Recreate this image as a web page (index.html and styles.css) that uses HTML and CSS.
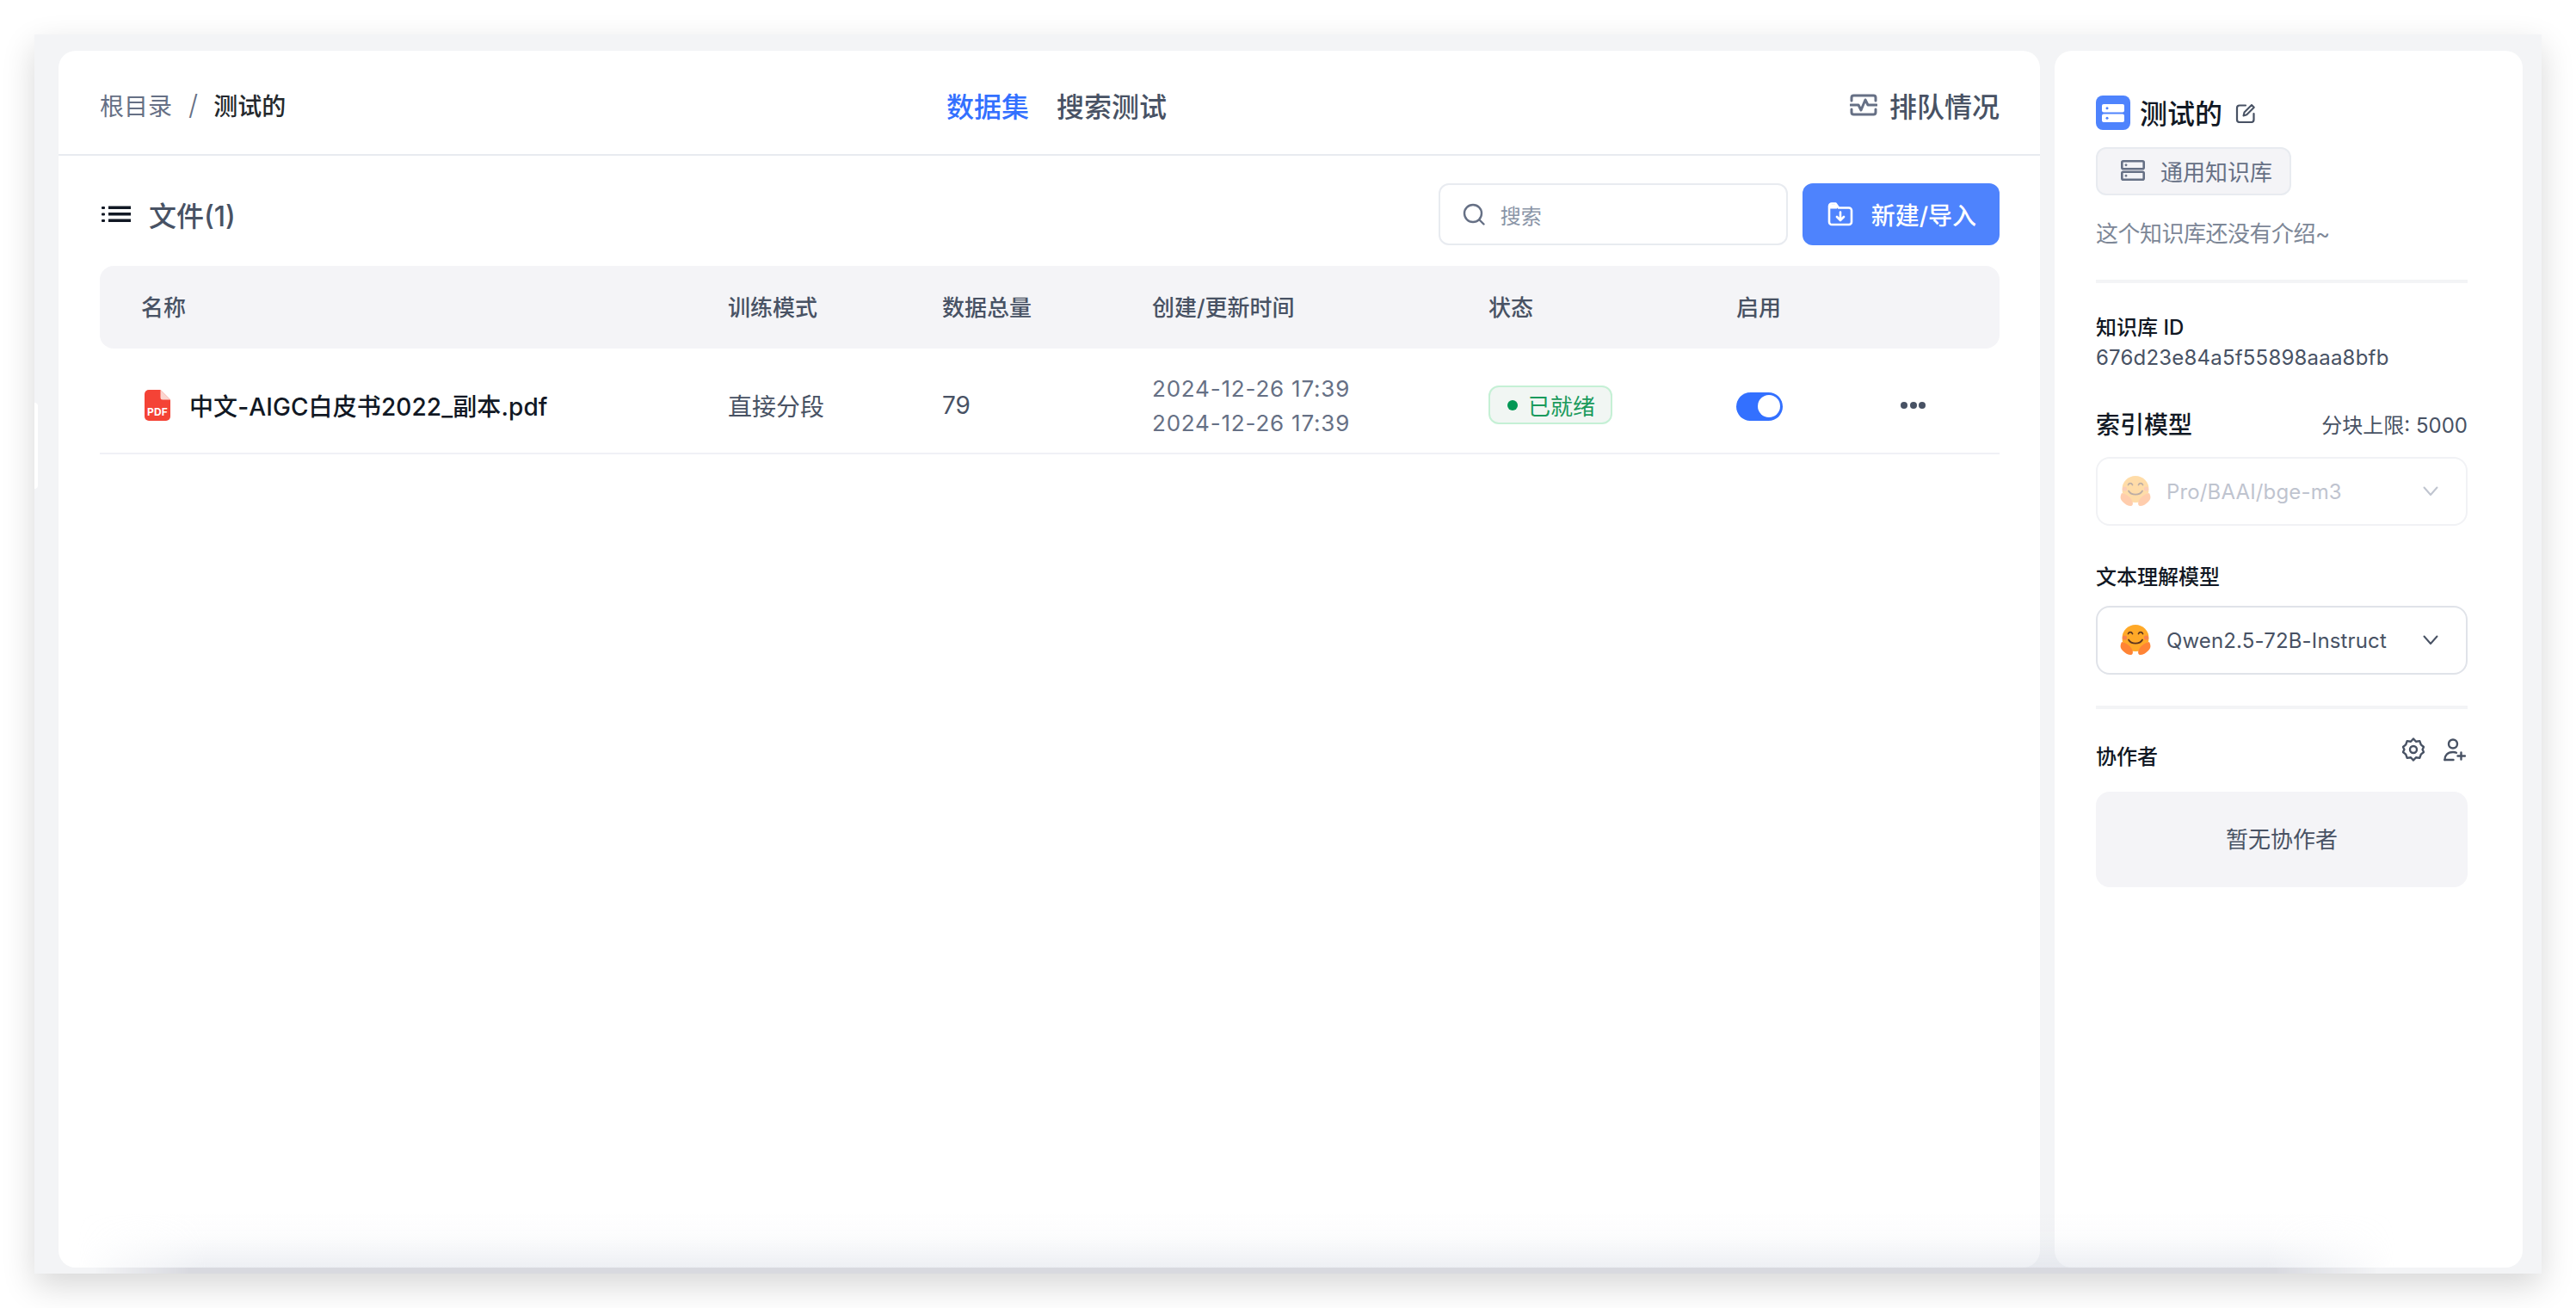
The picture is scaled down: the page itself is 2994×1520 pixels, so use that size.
FILE: index.html
```html
<!DOCTYPE html>
<html lang="zh-CN">
<head>
    <meta charset="UTF-8">
    <meta name="viewport" content="width=device-width, initial-scale=1.0">
    <title>测试的</title>
    <link rel="stylesheet" href="styles.css">
</head>
<body>
    <div class="frame">
        <main class="main-card">
            <header class="top-bar">
                <div class="crumbs">
                    <span class="crumb">根目录</span>
                    <span class="crumb-sep">/</span>
                    <span class="crumb-current">测试的</span>
                </div>
                <nav class="tabs">
                    <a class="tab tab-active">数据集</a>
                    <a class="tab">搜索测试</a>
                </nav>
                <a class="queue">
                    <svg class="queue-icon" viewBox="0 0 32 26" fill="none" stroke="currentColor" stroke-width="3" stroke-linecap="round" stroke-linejoin="round">
                        <path d="M2 8V4.500A2.500 2.500 0 0 1 4.500 2h23A2.500 2.500 0 0 1 30 4.500V8"/>
                        <path d="M2 18v3.500A2.500 2.500 0 0 0 4.500 24h23a2.500 2.500 0 0 0 2.500-2.500V18"/>
                        <path d="M1 13h9l3 6 5-12 3 6h10"/>
                    </svg>
                    排队情况
                </a>
            </header>

            <section class="files">
                <div class="toolbar">
                    <div class="files-title">
                        <svg class="list-icon" viewBox="0 0 34 20" fill="#111824">
                            <rect x="0" y="1" width="4" height="3" rx="1"/>
                            <rect x="0" y="8.500" width="4" height="3" rx="1"/>
                            <rect x="0" y="16" width="4" height="3" rx="1"/>
                            <rect x="8" y="0.500" width="26" height="3.500"/>
                            <rect x="8" y="8" width="26" height="3.500"/>
                            <rect x="8" y="15.500" width="26" height="3.500"/>
                        </svg>
                        文件(1)
                    </div>
                    <div class="search-box">
                        <svg class="search-icon" viewBox="0 0 26 26" fill="none" stroke="currentColor" stroke-width="2.400" stroke-linecap="round">
                            <circle cx="12" cy="12" r="10"/>
                            <path d="M19.500 19.500L24.500 24.500"/>
                        </svg>
                        <span class="search-text">搜索</span>
                    </div>
                    <button class="new-btn">
                        <svg class="new-icon" viewBox="0 0 30 28" fill="none" stroke="#fff" stroke-width="2.600" stroke-linecap="round" stroke-linejoin="round">
                            <path d="M2 4.500A3 3 0 0 1 5 1.500h4.500l3.500 5h12A3 3 0 0 1 28 9.500v13.500a3 3 0 0 1-3 3H5a3 3 0 0 1-3-3z"/>
                            <path d="M2 3h9v4H2z" fill="#fff" stroke-width="1"/>
                            <path d="M15 11.500v9M11 17l4 4 4-4"/>
                        </svg>
                        新建/导入
                    </button>
                </div>

                <div class="table-head">
                    <div class="cell cell-name">名称</div>
                    <div class="cell">训练模式</div>
                    <div class="cell">数据总量</div>
                    <div class="cell">创建/更新时间</div>
                    <div class="cell">状态</div>
                    <div class="cell">启用</div>
                    <div class="cell"></div>
                </div>
                <div class="table-row">
                    <div class="cell cell-name file-name">
                        <svg class="pdf-icon" viewBox="0 0 30 36">
                            <path d="M5 0h13.500L30 11.500V31a5 5 0 0 1-5 5H5a5 5 0 0 1-5-5V5a5 5 0 0 1 5-5z" fill="#f44336"/>
                            <path d="M18.500 0L30 11.500H21a2.500 2.500 0 0 1-2.500-2.500z" fill="#fbd5cf"/>
                            <text x="15" y="29.500" class="pdf-label">PDF</text>
                        </svg>
                        中文-AIGC白皮书2022_副本.pdf
                    </div>
                    <div class="cell cell-mode">直接分段</div>
                    <div class="cell cell-mode">79</div>
                    <div class="cell cell-date">
                        <div>2024-12-26 17:39</div>
                        <div>2024-12-26 17:39</div>
                    </div>
                    <div class="cell">
                        <span class="status"><i class="status-dot"></i>已就绪</span>
                    </div>
                    <div class="cell">
                        <span class="switch"><i class="switch-knob"></i></span>
                    </div>
                    <div class="cell">
                        <span class="more"><i></i><i></i><i></i></span>
                    </div>
                </div>
            </section>
        </main>

        <aside class="side-card">
            <div class="side-title">
                <svg class="kb-icon" viewBox="0 0 40 40">
                    <rect width="40" height="40" rx="8" fill="#4e83fd"/>
                    <rect x="7" y="10" width="26" height="9.500" rx="2" fill="#fff"/>
                    <rect x="7" y="21.500" width="26" height="9.500" rx="2" fill="#fff"/>
                    <circle cx="13" cy="14.700" r="1.500" fill="#4e83fd"/>
                    <circle cx="13" cy="26.200" r="1.500" fill="#4e83fd"/>
                </svg>
                <span class="side-name">测试的</span>
                <svg class="edit-icon" viewBox="0 0 24 24" fill="none" stroke="currentColor" stroke-width="2.200" stroke-linecap="round" stroke-linejoin="round">
                    <path d="M12 3.500H5a3 3 0 0 0-3 3V20a3 3 0 0 0 3 3h13.500a3 3 0 0 0 3-3v-7"/>
                    <path d="M9.500 15.500l1-4L19 3l2.800 2.800-8.500 8.500z" stroke-width="2"/>
                </svg>
            </div>
            <div class="kb-tag">
                <svg class="tag-icon" viewBox="0 0 28 24" fill="none" stroke="currentColor" stroke-width="2.600">
                    <rect x="1.300" y="1.300" width="25.400" height="9" rx="1.500"/>
                    <rect x="1.300" y="13.700" width="25.400" height="9" rx="1.500"/>
                    <circle cx="6" cy="5.800" r="1" fill="currentColor" stroke-width="1"/>
                    <circle cx="6" cy="18.200" r="1" fill="currentColor" stroke-width="1"/>
                </svg>
                通用知识库
            </div>
            <p class="side-desc">这个知识库还没有介绍~</p>
            <div class="side-line side-line-first"></div>

            <div class="side-label id-label">知识库 ID</div>
            <div class="kb-id">676d23e84a5f55898aaa8bfb</div>

            <div class="index-head">
                <span class="index-title">索引模型</span>
                <span class="index-limit">分块上限: 5000</span>
            </div>
            <div class="select select-off">
                <svg class="hug" viewBox="0 0 36 36">
                    <use href="#hug-face"/>
                </svg>
                <span class="select-text">Pro/BAAI/bge-m3</span>
                <svg class="chevron" viewBox="0 0 18 12" fill="none" stroke="currentColor" stroke-width="2" stroke-linecap="round" stroke-linejoin="round"><path d="M1.500 1.500L9 10l7.500-8.500"/></svg>
            </div>

            <div class="side-label text-label">文本理解模型</div>
            <div class="select">
                <svg class="hug" viewBox="0 0 36 36">
                    <g id="hug-face">
                        <circle cx="18" cy="15.500" r="15.500" fill="#ffa928"/>
                        <path d="M2 20c-2 4-2 7 1 10s6 5 10 5c3-1 2-5 0-8s-6-6-11-7z" fill="#ff8435"/>
                        <path d="M34 20c2 4 2 7-1 10s-6 5-10 5c-3-1-2-5 0-8s6-6 11-7z" fill="#ff8435"/>
                        <circle cx="5.500" cy="15" r="2.600" fill="#f7834f"/>
                        <circle cx="30.500" cy="15" r="2.600" fill="#f7834f"/>
                        <path d="M10 17.500c3 5.500 13 5.500 16 0" fill="none" stroke="#5a3420" stroke-width="1.800" stroke-linecap="round"/>
                        <path d="M9.500 10.500c1-2.500 4-2.500 5 0M21.500 10.500c1-2.500 4-2.500 5 0" fill="none" stroke="#5a3420" stroke-width="1.700" stroke-linecap="round"/>
                    </g>
                </svg>
                <span class="select-text">Qwen2.5-72B-Instruct</span>
                <svg class="chevron" viewBox="0 0 18 12" fill="none" stroke="currentColor" stroke-width="2" stroke-linecap="round" stroke-linejoin="round"><path d="M1.500 1.500L9 10l7.500-8.500"/></svg>
            </div>
            <div class="side-line side-line-second"></div>

            <div class="team-head">
                <span class="side-label">协作者</span>
                <div class="team-actions">
                    <svg class="team-icon" viewBox="0 0 26 28" fill="none" stroke="currentColor" stroke-width="2.400" stroke-linejoin="round">
                        <path d="M13 1.500l3 3.300 4.300-.7 1.500 4.200L25 11l-1.400 3 1.400 3-3.200 2.700-1.500 4.200-4.300-.7-3 3.300-3-3.300-4.300.7-1.500-4.200L1 17l1.400-3L1 11l3.200-2.700 1.500-4.200 4.300.7z"/>
                        <circle cx="13" cy="14" r="4"/>
                    </svg>
                    <svg class="team-icon" viewBox="0 0 26 26" fill="none" stroke="currentColor" stroke-width="2.400" stroke-linecap="round">
                        <circle cx="11" cy="6.500" r="5"/>
                        <path d="M1.500 25c0-5 3-9 9.500-9 1.500 0 3 .2 4 .7"/>
                        <path d="M1.500 25h10M20.500 16.500v8M16.500 20.500h8.500"/>
                    </svg>
                </div>
            </div>
            <div class="team-empty">暂无协作者</div>
        </aside>

        <div class="edge-mark"></div>
        <div class="shade-cards"></div>
        <div class="shade-band"></div>
    </div>
</body>
</html>
```

FILE: styles.css
```css
* {
    box-sizing: border-box;
}
body {
    margin: 0;
    width: 2994px;
    height: 1520px;
    padding: 40px;
    overflow: hidden;
    background-color: #fff;
    font-family: Inter, "Noto Sans CJK SC", sans-serif;
    color: #485264;
}
p {
    margin: 0;
}
svg {
    display: block;
    flex: none;
}
.frame {
    position: relative;
    display: flex;
    gap: 17px;
    width: 2914px;
    height: 1440px;
    padding: 19px 22px 7px 28px;
    background-color: #f3f4f6;
    box-shadow: 0 14px 36px rgba(0, 0, 0, 0.16);
}
.main-card {
    width: 2303px;
    background: #fff;
    border-radius: 20px;
}
.top-bar {
    display: flex;
    align-items: center;
    justify-content: space-between;
    height: 122px;
    padding: 5px 47px 0 48px;
    border-bottom: 2px solid #e8ebf0;
}
.crumbs {
    display: flex;
    align-items: center;
    font-size: 28px;
}
.crumb {
    color: #667085;
}
.crumb-sep {
    margin: 0 18px 0 19px;
    font-size: 32px;
    font-weight: 300;
    color: #667085;
}
.crumb-current {
    font-weight: 500;
    color: #24282c;
}
.tabs {
    display: flex;
    gap: 32px;
    margin-right: 26px;
    font-size: 32px;
    font-weight: 500;
}
.tab-active {
    color: #3370ff;
}
.queue {
    display: flex;
    align-items: center;
    gap: 14px;
    font-size: 32px;
    font-weight: 500;
}
.queue-icon {
    width: 32px;
    height: 26px;
    color: #667085;
}
.files {
    padding: 0 47px 0 48px;
}
.toolbar {
    display: flex;
    align-items: center;
    height: 72px;
    margin-top: 32px;
}
.files-title {
    display: flex;
    align-items: center;
    gap: 21px;
    flex: 1;
    font-size: 32px;
    font-weight: 500;
    margin-left: 2px;
}
.list-icon {
    width: 34px;
    height: 20px;
}
.search-box {
    display: flex;
    align-items: center;
    gap: 18px;
    width: 406px;
    height: 72px;
    padding-left: 26px;
    border: 2px solid #e8ebf0;
    border-radius: 12px;
    background: #fff;
}
.search-icon {
    width: 26px;
    height: 26px;
    color: #667085;
}
.search-text {
    font-size: 24px;
    color: #8a95a7;
}
.new-btn {
    display: flex;
    align-items: center;
    gap: 21px;
    height: 72px;
    margin-left: 17px;
    padding: 0 27px 0 29px;
    border: 0;
    border-radius: 12px;
    background: #4e83fd;
    color: #fff;
    font-family: inherit;
    font-size: 28px;
    font-weight: 500;
}
.new-icon {
    width: 30px;
    height: 28px;
}
.table-head,
.table-row {
    display: grid;
    grid-template-columns: 682px 249px 244px 391px 288px 191px 163px;
    align-items: center;
}
.table-head {
    height: 96px;
    margin-top: 24px;
    padding-bottom: 3px;
    border-radius: 16px;
    background: #f4f4f7;
    font-size: 26px;
    font-weight: 500;
}
.table-row {
    height: 123px;
    padding-top: 10px;
    border-bottom: 2px solid #f0f1f6;
}
.cell {
    padding-left: 48px;
}
.file-name {
    display: flex;
    align-items: center;
    gap: 22px;
    padding-left: 52px;
    font-size: 28px;
    font-weight: 500;
    letter-spacing: 0.1px;
    color: #111824;
}
.pdf-icon {
    width: 30px;
    height: 36px;
}
.pdf-label {
    fill: #fff;
    font-size: 12px;
    font-weight: 700;
    text-anchor: middle;
}
.cell-mode {
    font-size: 28px;
}
.cell-date {
    margin-top: 2px;
    font-size: 26px;
    line-height: 40px;
    letter-spacing: 0.8px;
    color: #667085;
}
.status {
    display: inline-flex;
    align-items: center;
    gap: 12px;
    width: 144px;
    height: 45px;
    padding-left: 20px;
    border: 2px solid #c5f0d5;
    border-radius: 12px;
    background: #f1f6f3;
    font-size: 26px;
    color: #1a9a5c;
}
.status-dot {
    width: 12px;
    height: 12px;
    border-radius: 50%;
    background: #039855;
}
.switch {
    display: flex;
    justify-content: flex-end;
    align-items: center;
    width: 54px;
    height: 33px;
    margin-top: 3px;
    padding-right: 3px;
    border-radius: 17px;
    background: #3370ff;
}
.switch-knob {
    width: 26px;
    height: 26px;
    border-radius: 50%;
    background: #fff;
}
.more {
    display: flex;
    gap: 2.500px;
}
.more i {
    width: 8px;
    height: 8px;
    border-radius: 50%;
    background: #485264;
}
.side-card {
    width: 544px;
    padding: 52px 64px 0 48px;
    background: #fff;
    border-radius: 20px;
}
.side-title {
    display: flex;
    align-items: center;
    height: 40px;
}
.kb-icon {
    width: 40px;
    height: 40px;
}
.side-name {
    margin: 0 0 2px 11px;
    font-size: 32px;
    font-weight: 500;
    color: #111824;
}
.edit-icon {
    width: 24px;
    height: 24px;
    margin-left: 15px;
    color: #485264;
}
.kb-tag {
    display: inline-flex;
    align-items: center;
    gap: 18px;
    width: 227px;
    height: 56px;
    margin-top: 20px;
    padding: 0 0 2px 27px;
    border: 2px solid #e8ebf0;
    border-radius: 12px;
    background: #f4f4f7;
    font-size: 26px;
    color: #667085;
}
.tag-icon {
    width: 28px;
    height: 24px;
}
.side-desc {
    margin-top: 26px;
    font-size: 26px;
    line-height: 38px;
    letter-spacing: -0.5px;
    color: #7d8797;
}
.side-line {
    height: 4px;
    background: #f3f4f6;
}
.side-line-first {
    margin-top: 34px;
}
.side-label {
    font-size: 24px;
    font-weight: 500;
    line-height: 36px;
    color: #111824;
}
.id-label {
    margin-top: 34px;
}
.kb-id {
    font-size: 24px;
    line-height: 36px;
    letter-spacing: 0.2px;
    margin-top: -1px;
}
.index-head {
    display: flex;
    justify-content: space-between;
    align-items: center;
    height: 40px;
    margin-top: 38px;
}
.index-title {
    font-size: 28px;
    font-weight: 500;
    color: #111824;
}
.index-limit {
    font-size: 24px;
}
.select {
    display: flex;
    align-items: center;
    height: 80px;
    margin-top: 19px;
    padding: 0 32px 0 26px;
    border: 2px solid #e0e3e9;
    border-radius: 16px;
    font-size: 24px;
}
.select-off {
    border-color: #f1f2f5;
    color: #bfc4cf;
}
.select-off .hug {
    opacity: 0.4;
}
.hug {
    width: 36px;
    height: 36px;
}
.select-text {
    flex: 1;
    margin-left: 18px;
    letter-spacing: 0.15px;
    white-space: nowrap;
}
.chevron {
    width: 18px;
    height: 12px;
}
.text-label {
    margin-top: 42px;
}
.text-label + .select {
    margin-top: 15px;
}
.side-line-second {
    margin-top: 36px;
}
.team-head {
    display: flex;
    justify-content: space-between;
    align-items: flex-start;
    height: 64px;
    margin-top: 34px;
    padding-top: 4px;
}
.team-actions {
    display: flex;
    gap: 22px;
    margin: -5px 2px 0 0;
}
.team-icon {
    width: 26px;
    height: 28px;
    color: #485264;
}
.team-empty {
    display: flex;
    align-items: center;
    justify-content: center;
    height: 111px;
    margin-top: -2px;
    padding-bottom: 4px;
    border-radius: 16px;
    background: #f4f4f7;
    font-size: 26px;
}
.edge-mark {
    position: absolute;
    left: 0;
    top: 428px;
    width: 4px;
    height: 100px;
    background: #fff;
    border-radius: 0 4px 4px 0;
}
.shade-cards {
    position: absolute;
    left: 50px;
    right: 170px;
    bottom: 7px;
    height: 66px;
    background: linear-gradient(to top, rgba(213, 218, 228, 0.42), rgba(225, 228, 235, 0.1) 55%, rgba(255, 255, 255, 0));
    -webkit-mask-image: linear-gradient(to right, transparent, #000 150px, #000 calc(100% - 150px), transparent);
    mask-image: linear-gradient(to right, transparent, #000 150px, #000 calc(100% - 150px), transparent);
}
.shade-band {
    position: absolute;
    left: 70px;
    right: 190px;
    bottom: 0;
    height: 7px;
    background: #d8d9df;
    -webkit-mask-image: linear-gradient(to right, transparent, #000 110px, #000 calc(100% - 120px), transparent);
    mask-image: linear-gradient(to right, transparent, #000 110px, #000 calc(100% - 120px), transparent);
}
```
